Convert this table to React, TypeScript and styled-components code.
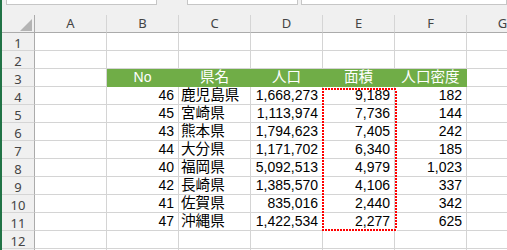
import React from "react";
import styled, { createGlobalStyle } from "styled-components";

const Global = createGlobalStyle`
  html, body { margin: 0; padding: 0; background: #ffffff; }
  body { width: 507px; height: 250px; overflow: hidden; }
`;

const Window = styled.div`
  display: flex;
  width: 507px;
  height: 250px;
  overflow: hidden;
  background: #ffffff;
`;

const Edge = styled.div`
  flex: none;
  width: 2px;
  background: #217346;
`;

const Main = styled.div`
  flex: 1;
  min-width: 0;
  display: flex;
  flex-direction: column;
`;

const FormulaBar = styled.div`
  flex: none;
  height: 15px;
  display: flex;
  align-items: flex-start;
  background: #f0f0f0;
`;

const Field = styled.div<{ $w?: number; $ml: number }>`
  box-sizing: border-box;
  height: 5px;
  margin-left: ${(p) => p.$ml}px;
  ${(p) => (p.$w ? `width: ${p.$w}px; flex: none;` : "flex: 1;")}
  background: #ffffff;
  border: 1px solid #c6c6c6;
  border-top: none;
`;

const Sheet = styled.div`
  position: relative;
  display: grid;
  grid-template-columns: 33px repeat(7, 72px);
  grid-auto-rows: 18px;
  background: #ffffff;
`;

const Corner = styled.div`
  box-sizing: border-box;
  display: flex;
  justify-content: flex-end;
  align-items: flex-end;
  padding: 0 2px 1px 0;
  background: #f0f0f0;
  border-right: 1px solid #ababab;
  border-bottom: 1px solid #ababab;
`;

const ColHead = styled.div`
  box-sizing: border-box;
  display: flex;
  justify-content: center;
  align-items: center;
  padding-bottom: 2px;
  background: #f0f0f0;
  border-right: 1px solid #d5d5d5;
  border-bottom: 1px solid #ababab;
  font: 13px "Noto Sans", "Open Sans", sans-serif;
  color: #444444;
`;

const RowHead = styled.div`
  box-sizing: border-box;
  display: flex;
  justify-content: center;
  align-items: center;
  padding-top: 2px;
  background: #f0f0f0;
  border-right: 1px solid #ababab;
  border-bottom: 1px solid #d5d5d5;
  font: 13px "Noto Sans", "Open Sans", sans-serif;
  color: #444444;
`;

type Align = "left" | "right" | "center";

const Cell = styled.div<{ $align: Align; $fill?: boolean; $jp?: boolean }>`
  box-sizing: border-box;
  overflow: hidden;
  white-space: nowrap;
  text-align: ${(p) => p.$align};
  padding: ${(p) => (p.$align === "left" ? "0 0 0 2px" : p.$align === "right" ? "0 4px 0 0" : "0")};
  font-family: "Liberation Sans", "Noto Sans CJK JP", sans-serif;
  font-size: ${(p) => (p.$jp ? "14.6px" : "14px")};
  line-height: 17px;
  color: ${(p) => (p.$fill ? "#ffffff" : "#000000")};
  background: ${(p) => (p.$fill ? "#70ad47" : "#ffffff")};
  border-right: 1px solid ${(p) => (p.$fill ? "#70ad47" : "#d4d4d4")};
  border-bottom: 1px solid ${(p) => (p.$fill ? "#70ad47" : "#d4d4d4")};
`;

const Marquee = styled.div`
  position: absolute;
  left: 320px;
  top: 73px;
  width: 75px;
  height: 143px;
  pointer-events: none;
  background:
    repeating-linear-gradient(90deg, #ff0000 0 2px, #ffffff 2px 3px) left top / 100% 2px no-repeat,
    repeating-linear-gradient(90deg, #ff0000 0 2px, #ffffff 2px 3px) left bottom / 100% 2px no-repeat,
    repeating-linear-gradient(180deg, #ff0000 0 2px, #ffffff 2px 3px) left top / 2px 100% no-repeat,
    repeating-linear-gradient(180deg, #ff0000 0 2px, #ffffff 2px 3px) right top / 2px 100% no-repeat;
`;

const COLS = ["A", "B", "C", "D", "E", "F", "G"];

type CellDef = { text: string; align: Align; fill?: boolean; jp?: boolean };

const data: [string, string, string, string, string][] = [
  ["46", "鹿児島県", "1,668,273", "9,189", "182"],
  ["45", "宮崎県", "1,113,974", "7,736", "144"],
  ["43", "熊本県", "1,794,623", "7,405", "242"],
  ["44", "大分県", "1,171,702", "6,340", "185"],
  ["40", "福岡県", "5,092,513", "4,979", "1,023"],
  ["42", "長崎県", "1,385,570", "4,106", "337"],
  ["41", "佐賀県", "835,016", "2,440", "342"],
  ["47", "沖縄県", "1,422,534", "2,277", "625"],
];

const blank: CellDef = { text: "", align: "left" };

function buildRows(): CellDef[][] {
  const rows: CellDef[][] = [];
  rows.push(COLS.map(() => blank));
  rows.push(COLS.map(() => blank));
  const head = ["No", "県名", "人口", "面積", "人口密度"];
  rows.push([
    blank,
    ...head.map((t) => ({ text: t, align: "center" as Align, fill: true, jp: t !== "No" })),
    blank,
  ]);
  data.forEach(([no, name, pop, area, dens]) => {
    rows.push([
      blank,
      { text: no, align: "right" },
      { text: name, align: "left", jp: true },
      { text: pop, align: "right" },
      { text: area, align: "right" },
      { text: dens, align: "right" },
      blank,
    ]);
  });
  rows.push(COLS.map(() => blank));
  rows.push(COLS.map(() => blank));
  return rows;
}

const rows = buildRows();
const VISIBLE_LABELS = 12;

export default function App() {
  return (
    <>
      <Global />
      <Window>
        <Edge />
        <Main>
          <FormulaBar>
            <Field $ml={4} $w={151} />
            <Field $ml={30} $w={111} />
            <Field $ml={3} />
          </FormulaBar>
          <Sheet>
            <Corner>
              <svg width="12" height="12" viewBox="0 0 12 12">
                <polygon points="12,0 12,12 0,12" fill="#b4b4b4" />
              </svg>
            </Corner>
            {COLS.map((c) => (
              <ColHead key={c}>{c}</ColHead>
            ))}
            {rows.map((r, i) => (
              <React.Fragment key={i}>
                <RowHead>{i < VISIBLE_LABELS ? i + 1 : ""}</RowHead>
                {r.map((c, j) => (
                  <Cell key={j} $align={c.align} $fill={c.fill} $jp={c.jp}>
                    {c.text}
                  </Cell>
                ))}
              </React.Fragment>
            ))}
            <Marquee />
          </Sheet>
        </Main>
      </Window>
    </>
  );
}
